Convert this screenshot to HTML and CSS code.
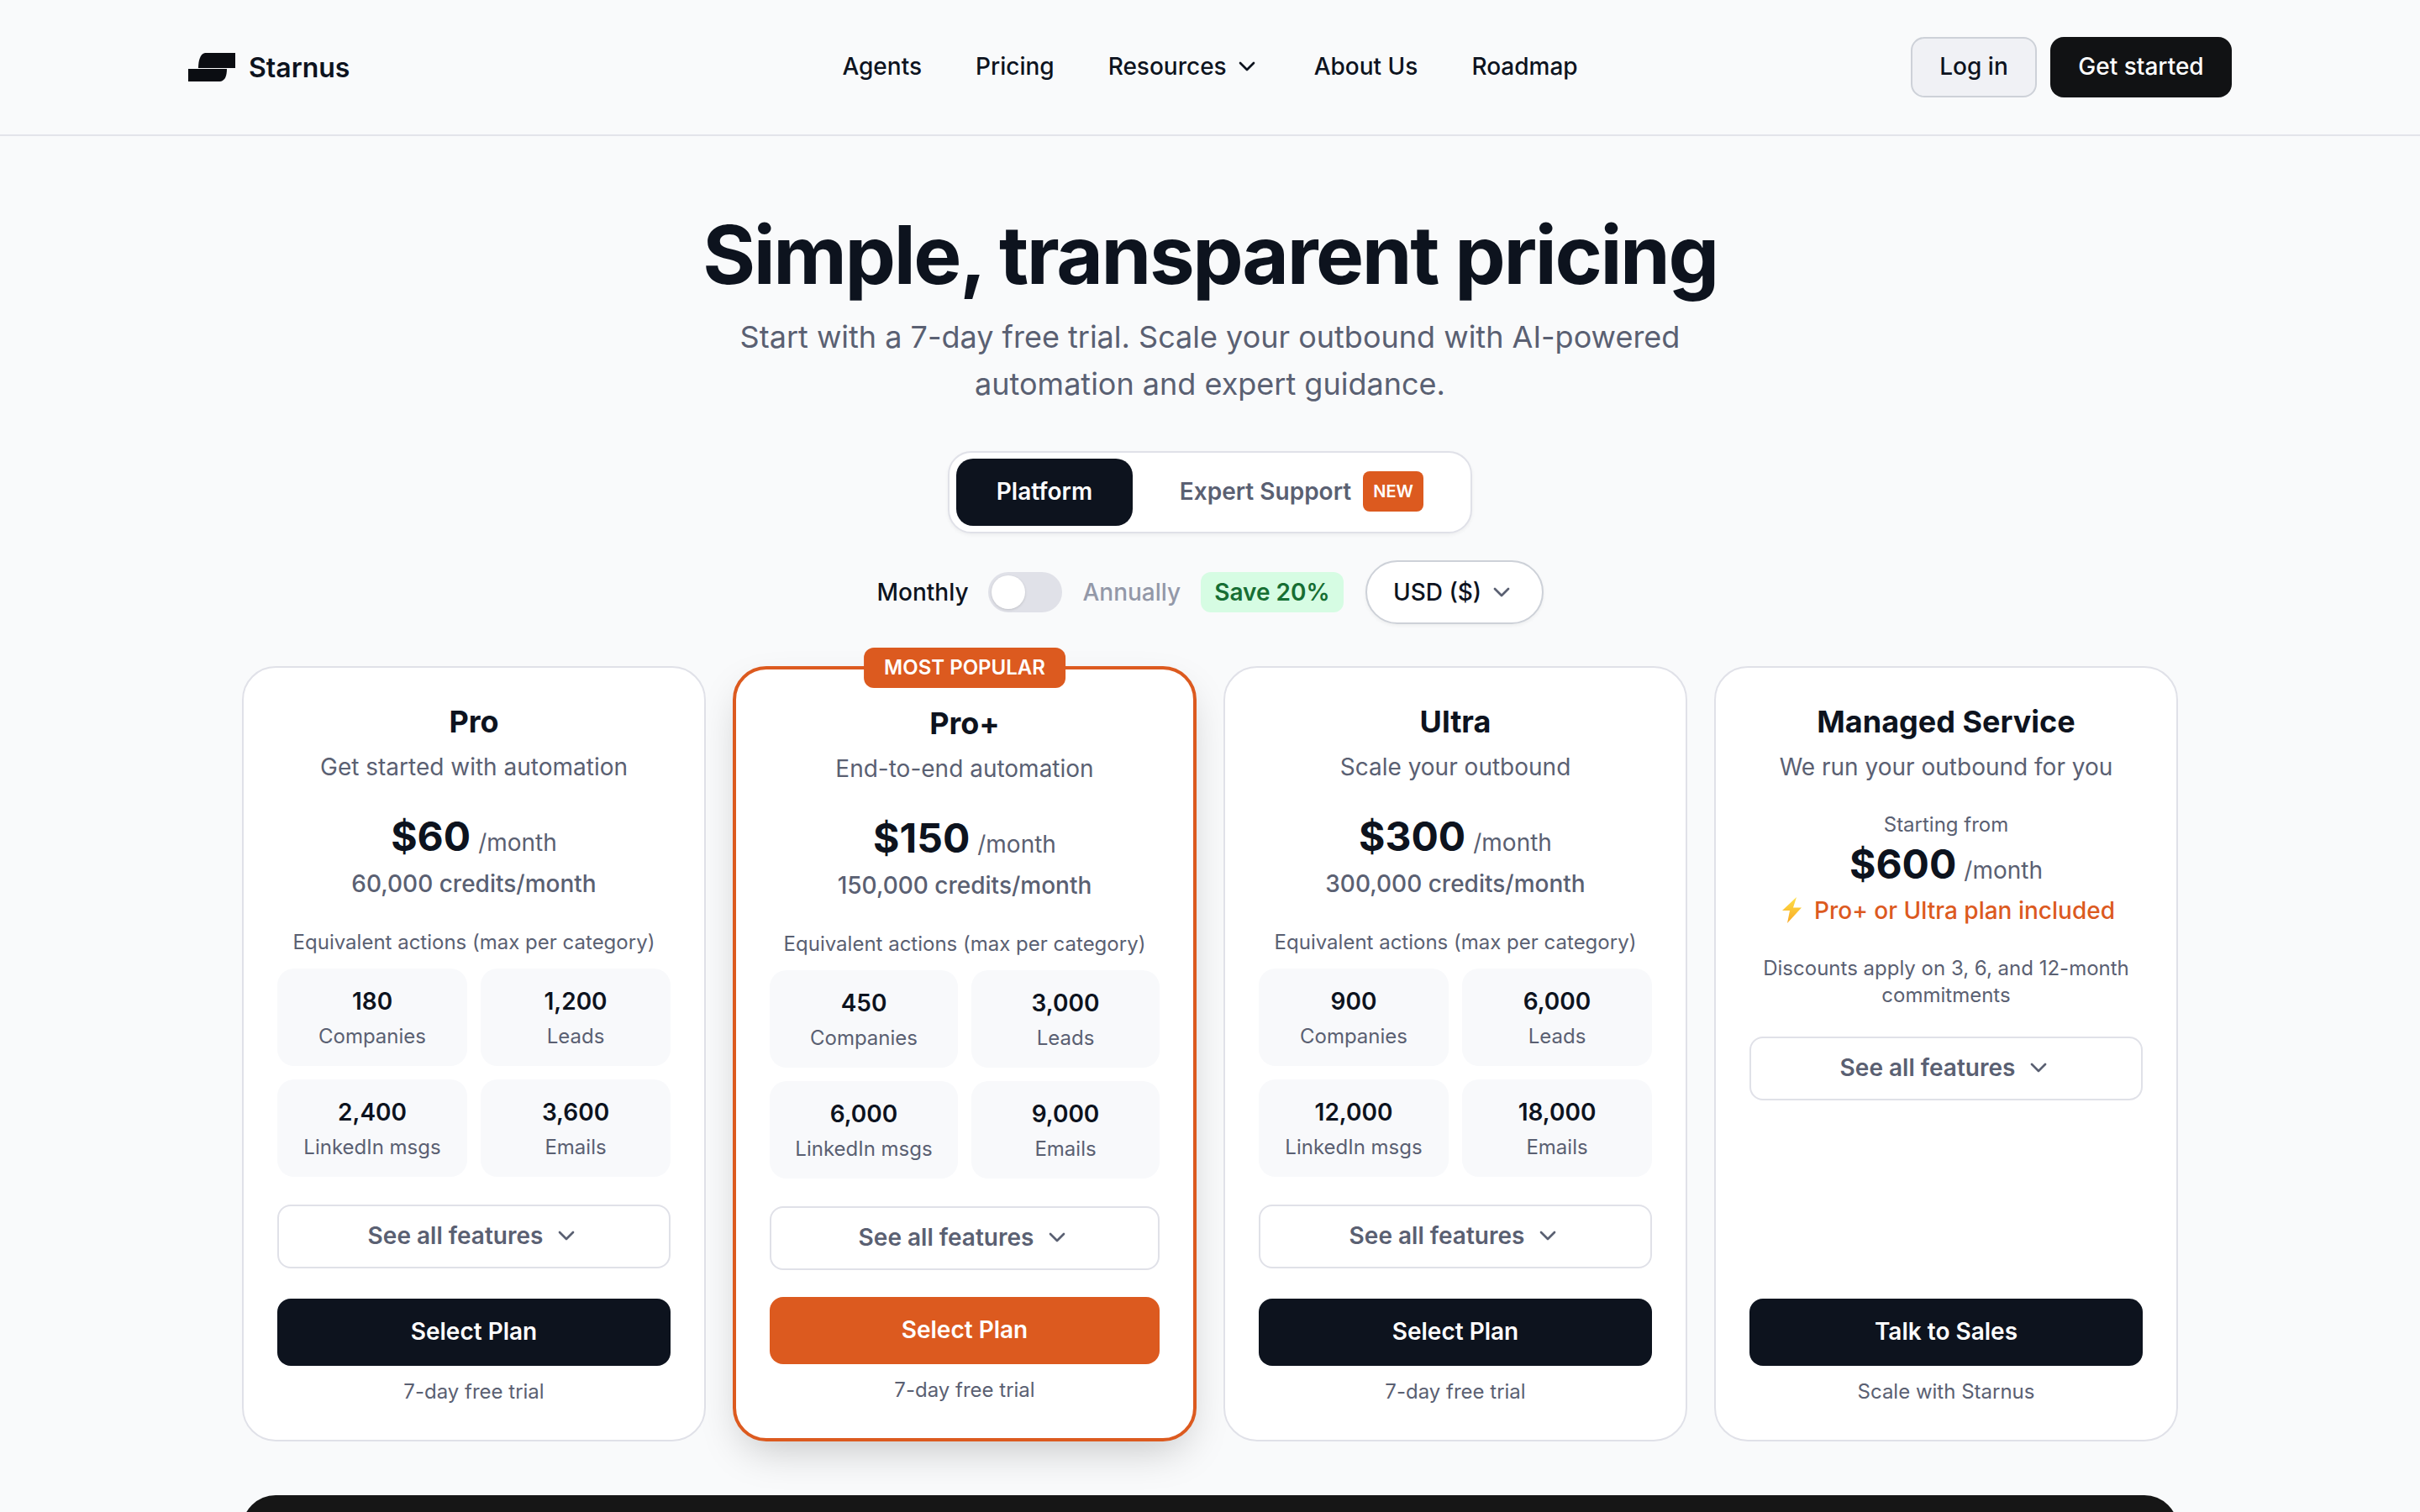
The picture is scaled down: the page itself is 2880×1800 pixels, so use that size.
FILE: index.html
```html
<!DOCTYPE html>
<html lang="en">
<head>
<meta charset="utf-8">
<title>Starnus Pricing</title>
<link rel="stylesheet" href="styles.css">
</head>
<body>
<header class="nav">
  <a class="brand">
    <svg class="logo" viewBox="0 0 56 34"><path d="M12 18C12 10 14 1 20 0H56V18Z"/><path d="M0 19H46C46 27 44 33 38 34H0Z"/></svg>
    <span>Starnus</span>
  </a>
  <nav class="links">
    <a>Agents</a><a>Pricing</a>
    <a class="has-caret">Resources <svg class="chev" viewBox="0 0 24 24"><path d="m6 9 6 6 6-6"/></svg></a>
    <a>About Us</a><a>Roadmap</a>
  </nav>
  <div class="actions"><a class="btn login">Log in</a><a class="btn start">Get started</a></div>
</header>
<main class="main">
  <h1>Simple, transparent pricing</h1>
  <p class="lead">Start with a 7-day free trial. Scale your outbound with AI-powered<br>automation and expert guidance.</p>
  <div class="tabs">
    <a class="tab active">Platform</a>
    <a class="tab">Expert Support <span class="new">NEW</span></a>
  </div>
  <div class="billing">
    <span class="monthly">Monthly</span>
    <span class="switch"><span class="knob"></span></span>
    <span class="annually">Annually</span>
    <span class="save">Save 20%</span>
    <span class="currency">USD ($) <svg class="chev" viewBox="0 0 24 24"><path d="m6 9 6 6 6-6"/></svg></span>
  </div>
  <section class="cards">
    <article class="card">
      <h2>Pro</h2>
      <p class="tag">Get started with automation</p>
      <div class="price"><b>$60</b><span>/month</span></div>
      <p class="credits">60,000 credits/month</p>
      <p class="equiv">Equivalent actions (max per category)</p>
      <div class="stats">
        <div class="stat"><b>180</b><span>Companies</span></div>
        <div class="stat"><b>1,200</b><span>Leads</span></div>
        <div class="stat"><b>2,400</b><span>LinkedIn msgs</span></div>
        <div class="stat"><b>3,600</b><span>Emails</span></div>
      </div>
      <a class="features">See all features <svg class="chev" viewBox="0 0 24 24"><path d="m6 9 6 6 6-6"/></svg></a>
      <a class="cta">Select Plan</a>
      <p class="foot">7-day free trial</p>
    </article>
    <article class="card featured">
      <span class="ribbon">MOST POPULAR</span>
      <h2>Pro+</h2>
      <p class="tag">End-to-end automation</p>
      <div class="price"><b>$150</b><span>/month</span></div>
      <p class="credits">150,000 credits/month</p>
      <p class="equiv">Equivalent actions (max per category)</p>
      <div class="stats">
        <div class="stat"><b>450</b><span>Companies</span></div>
        <div class="stat"><b>3,000</b><span>Leads</span></div>
        <div class="stat"><b>6,000</b><span>LinkedIn msgs</span></div>
        <div class="stat"><b>9,000</b><span>Emails</span></div>
      </div>
      <a class="features">See all features <svg class="chev" viewBox="0 0 24 24"><path d="m6 9 6 6 6-6"/></svg></a>
      <a class="cta">Select Plan</a>
      <p class="foot">7-day free trial</p>
    </article>
    <article class="card">
      <h2>Ultra</h2>
      <p class="tag">Scale your outbound</p>
      <div class="price"><b>$300</b><span>/month</span></div>
      <p class="credits">300,000 credits/month</p>
      <p class="equiv">Equivalent actions (max per category)</p>
      <div class="stats">
        <div class="stat"><b>900</b><span>Companies</span></div>
        <div class="stat"><b>6,000</b><span>Leads</span></div>
        <div class="stat"><b>12,000</b><span>LinkedIn msgs</span></div>
        <div class="stat"><b>18,000</b><span>Emails</span></div>
      </div>
      <a class="features">See all features <svg class="chev" viewBox="0 0 24 24"><path d="m6 9 6 6 6-6"/></svg></a>
      <a class="cta">Select Plan</a>
      <p class="foot">7-day free trial</p>
    </article>
    <article class="card">
      <h2>Managed Service</h2>
      <p class="tag">We run your outbound for you</p>
      <p class="from">Starting from</p>
      <div class="price managed"><b>$600</b><span>/month</span></div>
      <p class="included"><svg class="bolt" viewBox="0 0 24 32"><defs><linearGradient id="boltfill" x1="0" y1="0" x2="0" y2="1"><stop offset="0" stop-color="#fde047"/><stop offset="1" stop-color="#f9a825"/></linearGradient></defs><path fill="url(#boltfill)" d="M17 0L0 16H9L6 31L23 12.5H13Z"/></svg> Pro+ or Ultra plan included</p>
      <p class="discount">Discounts apply on 3, 6, and 12-month commitments</p>
      <a class="features">See all features <svg class="chev" viewBox="0 0 24 24"><path d="m6 9 6 6 6-6"/></svg></a>
      <a class="cta">Talk to Sales</a>
      <p class="foot">Scale with Starnus</p>
    </article>
  </section>
  <div class="banner"></div>
</main>
</body>
</html>
```
FILE: styles.css
```css
* { box-sizing: border-box; }
html, body { margin: 0; height: 1800px; overflow: hidden; }
body { background: #f9fafb; color: #0d131e; font-family: Inter, "Noto Sans", sans-serif; }
p, h1, h2 { margin: 0; }

.nav { display: grid; grid-template-columns: 1fr auto 1fr; align-items: center; height: 162px; padding: 0 224px; border-bottom: 2px solid #e3e4ea; }
.brand { display: flex; align-items: center; gap: 16px; font-size: 32px; font-weight: 600; }
.logo { width: 56px; height: 34px; fill: #0b0d12; }
.links { display: flex; align-items: center; gap: 64px; padding-bottom: 2px; font-size: 28px; font-weight: 500; }
.has-caret { display: flex; align-items: center; gap: 8px; }
.chev { width: 32px; height: 32px; fill: none; stroke: currentColor; stroke-width: 2; stroke-linecap: round; stroke-linejoin: round; }
.actions { display: flex; justify-content: flex-end; gap: 16px; }
.btn { display: flex; align-items: center; justify-content: center; height: 72px; padding-bottom: 2px; border-radius: 16px; font-size: 28px; font-weight: 500; }
.login { width: 150px; background: #f0f1f5; border: 2px solid #cdd1d8; }
.start { width: 216px; background: #111214; color: #fff; }

.main { display: flex; flex-direction: column; align-items: center; width: 2304px; margin: 0 auto; }
h1 { margin-top: 88px; font-size: 96px; line-height: 106px; font-weight: 700; letter-spacing: -0.025em; }
.lead { margin-top: 17px; font-size: 36px; line-height: 56px; color: #5a6072; text-align: center; }

.tabs { display: flex; align-items: center; gap: 8px; width: 624px; height: 98px; margin-top: 52px; padding: 8px; background: #fff; border: 2px solid #e0e1e8; border-radius: 28px; box-shadow: 0 2px 4px rgba(0,0,0,.05); }
.tab { display: flex; align-items: center; justify-content: center; gap: 14px; height: 80px; padding-bottom: 2px; border-radius: 20px; font-size: 28px; font-weight: 600; color: #5a6072; }
.tab.active { width: 210px; background: #0d131e; color: #fff; }
.new { display: flex; align-items: center; justify-content: center; width: 72px; height: 48px; background: #dc5a1f; color: #fff; border-radius: 8px; font-size: 20px; font-weight: 600; }
.tab:not(.active) { flex: 1; }

.billing { display: flex; align-items: center; height: 76px; margin-top: 32px; font-size: 28px; font-weight: 500; }
.monthly { margin-right: 24px; }
.switch { width: 88px; height: 48px; margin-right: 24px; padding: 4px; background: #e0e1e8; border-radius: 24px; }
.knob { display: block; width: 40px; height: 40px; background: #fff; border-radius: 50%; box-shadow: 0 1px 3px rgba(0,0,0,.15); }
.annually { margin-right: 24px; color: #9398a8; }
.save { display: flex; align-items: center; height: 48px; padding: 0 16px; margin-right: 26px; background: #d6fce3; color: #166e33; border-radius: 12px; font-weight: 600; }
.currency { display: flex; align-items: center; justify-content: center; gap: 8px; width: 212px; height: 76px; background: #fff; border: 2px solid #cdd1d8; border-radius: 38px; box-shadow: 0 2px 4px rgba(0,0,0,.05); }
.currency .chev { color: #5a6072; }

.cards { display: grid; grid-template-columns: repeat(4, 552px); gap: 32px; width: 100%; height: 923px; margin-top: 50px; }
.card { position: relative; display: flex; flex-direction: column; padding: 40px; text-align: center; background: #fff; border: 2px solid #e0e1e8; border-radius: 40px; }
.featured { border: 4px solid #dc5a1f; box-shadow: 0 20px 50px -12px rgba(0,0,0,.22); }
.ribbon { position: absolute; top: -26px; left: 50%; transform: translateX(-50%); display: block; padding: 0 24px; height: 48px; line-height: 48px; background: #dc5a1f; color: #fff; border-radius: 12px; font-size: 24px; font-weight: 600; white-space: nowrap; }
h2 { font-size: 36px; line-height: 48px; font-weight: 700; }
.tag { margin-top: 10px; font-size: 28px; line-height: 40px; color: #5a6072; }
.price { display: flex; justify-content: center; align-items: baseline; gap: 9px; height: 72px; margin-top: 27px; line-height: 72px; }
.price b { font-size: 48px; font-weight: 700; }
.price span { font-size: 28px; color: #5a6072; }
.credits { margin-top: 0; font-size: 28px; line-height: 40px; font-weight: 500; color: #5a6072; }
.equiv { margin-top: 32px; font-size: 24px; line-height: 36px; color: #5a6072; }
.stats { display: grid; grid-template-columns: 1fr 1fr; gap: 16px; margin-top: 13px; }
.stat { display: flex; flex-direction: column; align-items: center; justify-content: center; height: 116px; padding-top: 2px; background: #f8f9fb; border-radius: 20px; }
.stat b { font-size: 28px; line-height: 44px; font-weight: 600; }
.stat span { font-size: 24px; line-height: 40px; color: #5a6072; }
.features { display: flex; align-items: center; justify-content: center; gap: 12px; height: 76px; margin-top: 33px; padding-bottom: 2px; border: 2px solid #e0e1e8; border-radius: 16px; font-size: 28px; font-weight: 600; color: #5a6072; }
.cta { display: flex; align-items: center; justify-content: center; height: 80px; margin-top: auto; padding-bottom: 2px; background: #0d131e; color: #fff; border-radius: 16px; font-size: 28px; font-weight: 600; }
.featured .cta { background: #dc5a1f; }
.foot { margin-top: 14px; font-size: 24px; line-height: 34px; color: #5a6072; }
.from { margin-top: 31px; font-size: 24px; line-height: 36px; color: #5a6072; }
.price.managed { height: 58px; margin-top: 0; line-height: 58px; }
.included { display: flex; align-items: center; justify-content: center; gap: 14px; margin-top: 6px; padding-left: 6px; font-size: 28px; line-height: 40px; font-weight: 500; color: #dc5a1f; }
.bolt { width: 24px; height: 32px; }
.discount { margin-top: 33px; font-size: 24px; line-height: 32px; color: #5a6072; }

.banner { flex: none; width: 100%; height: 200px; margin-top: 64px; background: #161616; border-radius: 40px 40px 0 0; }
```
